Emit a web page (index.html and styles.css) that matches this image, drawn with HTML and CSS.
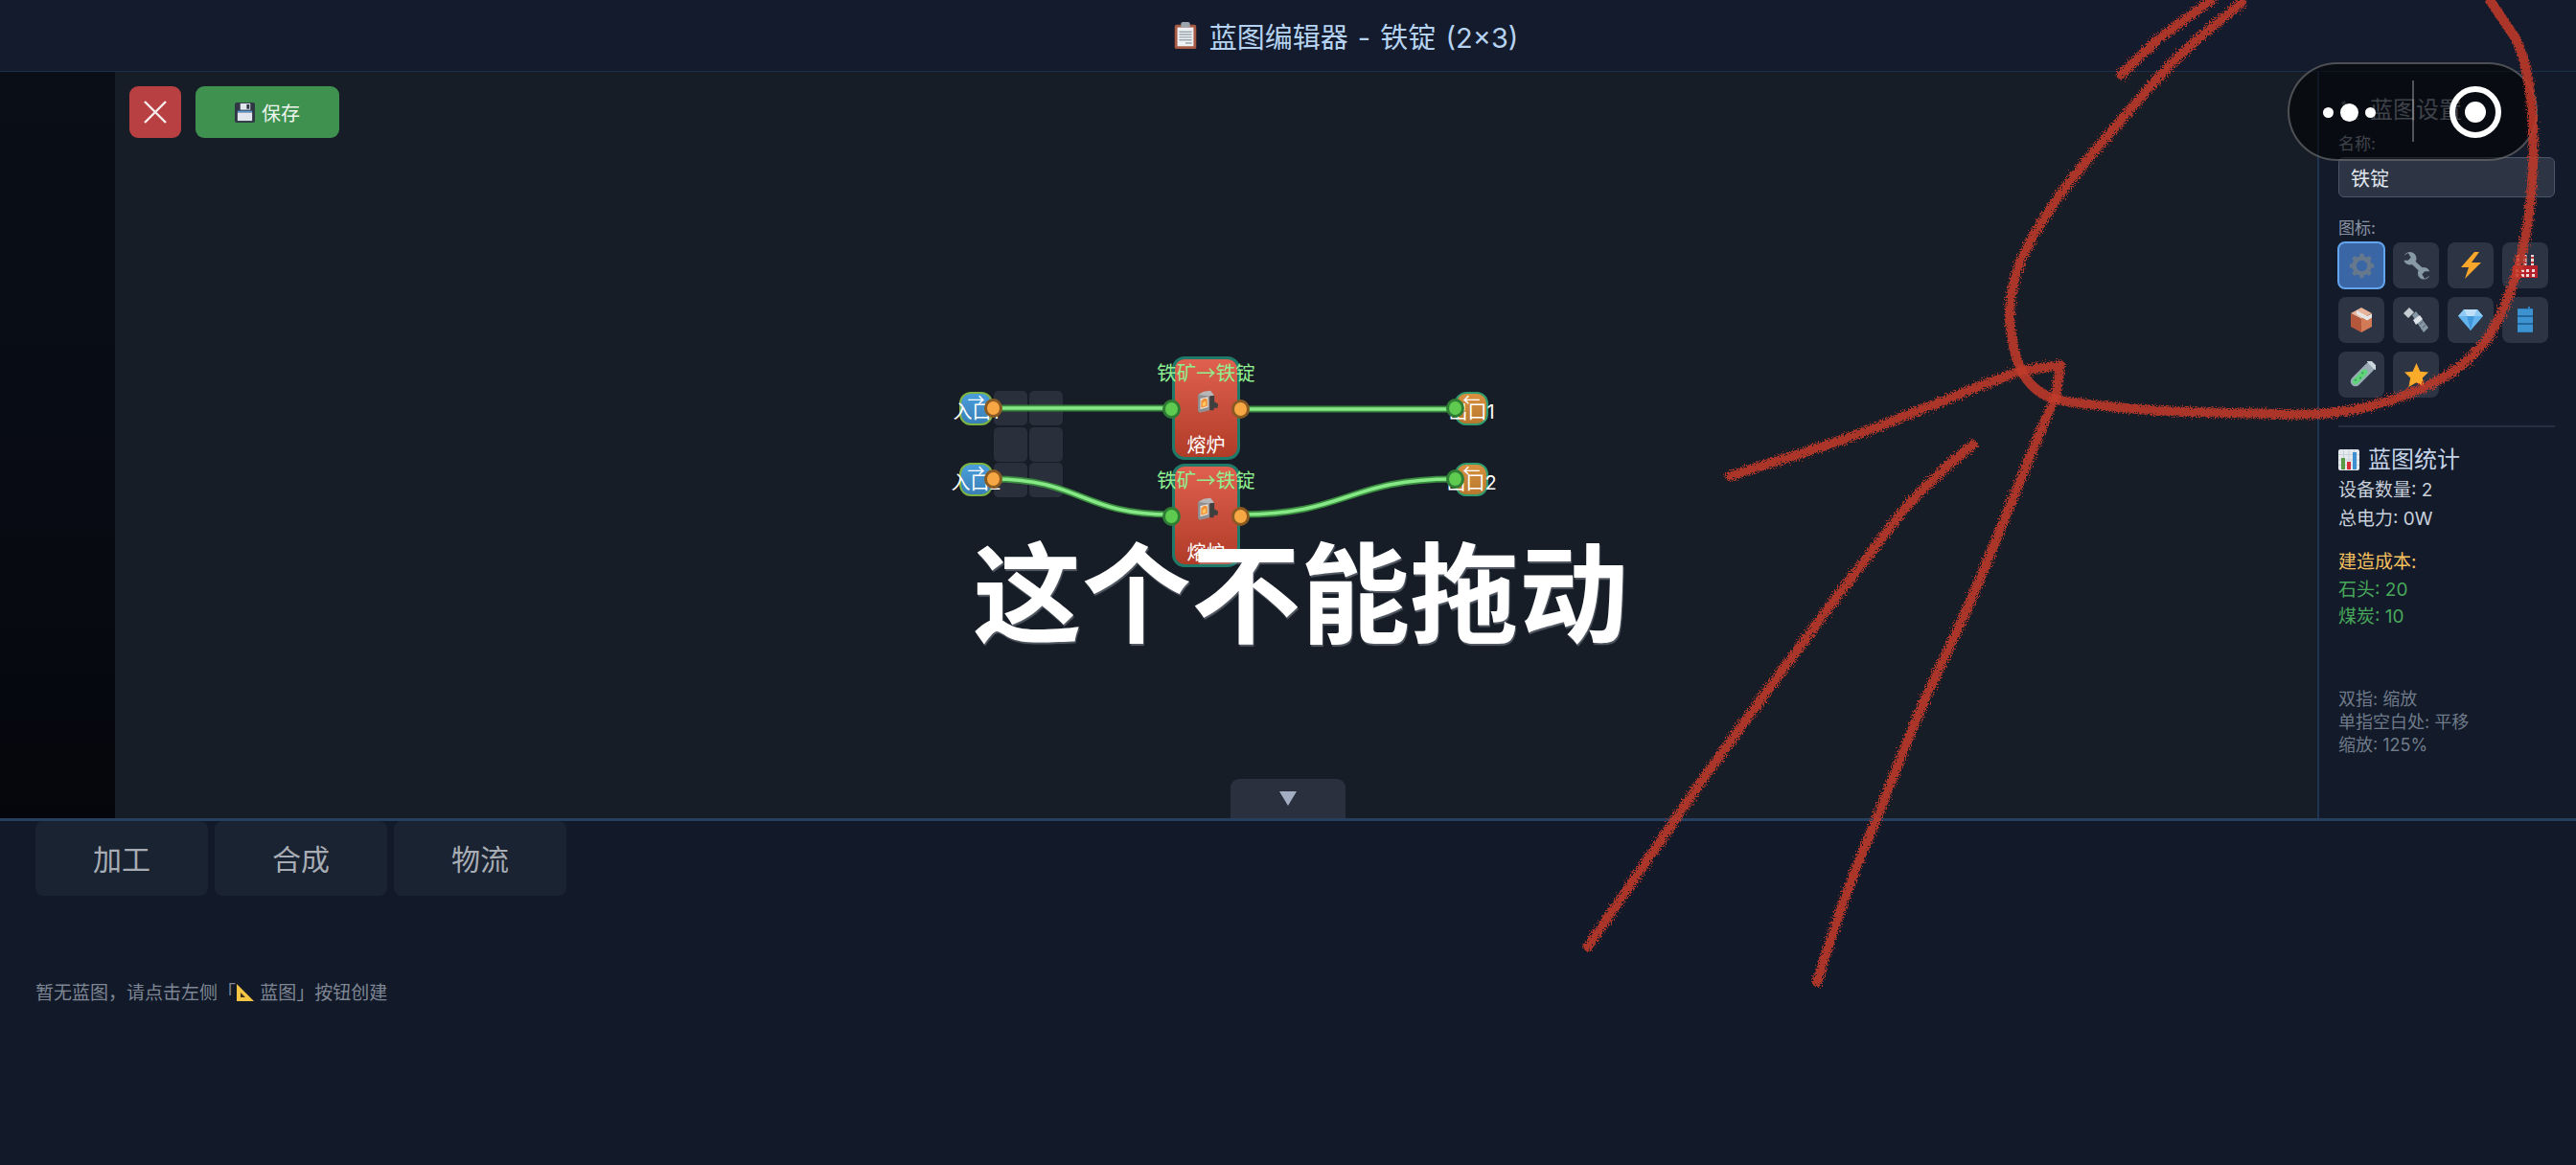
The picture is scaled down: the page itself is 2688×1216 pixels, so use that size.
FILE: index.html
```html
<!DOCTYPE html>
<html lang="zh-CN">
<head>
    <meta charset="UTF-8">
    <title>蓝图编辑器</title>
    <link rel="stylesheet" href="styles.css">
</head>
<body>
    <svg class="defs" width="0" height="0">
        <defs>
            <symbol id="furnace" viewBox="0 0 32 32">
                <path d="M5 7Q5 5 8 4L20 3L20 26L9 29Q5 29 5 26Z" fill="#8f8f8f"/>
                <path d="M6 6L12 2L21 1L26 7L20 8Z" fill="#b8b8b8"/>
                <path d="M8 11L18 9L18 22L8 25Z" fill="#e8e2da"/>
                <path d="M9 14Q13 9 17 12L17 21L9 23Z" fill="#f0923a"/>
                <path d="M11 17Q13 14 15 15L15 20L11 21Z" fill="#ffc861"/>
                <path d="M20 8L26 7L26 15L31 18L30 23L26 23L25 26L20 26Z" fill="#3f3f3f"/>
            </symbol>
        </defs>
    </svg>

    <header class="top-bar">
        <svg class="title-icon" viewBox="0 0 26 32">
            <rect x="1" y="4" width="24" height="27" rx="2" fill="#a65a44"/>
            <rect x="4" y="7" width="18" height="21" fill="#eef1f4"/>
            <rect x="8" y="1" width="10" height="6" rx="2" fill="#9aa5ad"/>
            <path d="M6 12h14M6 15h14M6 18h14M6 21h14M13 24.500h7" stroke="#9aa5ad" stroke-width="1.500"/>
        </svg>
        <span>蓝图编辑器 - 铁锭 (2×3)</span>
    </header>

    <main class="editor">
        <div class="left-strip"></div>

        <section class="canvas">
            <div class="canvas-actions">
                <button class="btn-close">
                    <svg viewBox="0 0 24 24" width="24" height="24"><path d="M1 1L23 23M23 1L1 23" stroke="#f6eeee" stroke-width="2.400"/></svg>
                </button>
                <button class="btn-save">
                    <svg viewBox="0 0 22 22" width="21" height="21">
                        <rect width="22" height="22" rx="2" fill="#2f3644"/>
                        <rect x="6" y="1" width="11" height="7" fill="#e2e7ee"/>
                        <rect x="13" y="2" width="3" height="5" fill="#2f3644"/>
                        <rect x="3" y="9" width="16" height="2" fill="#5b9bd5"/>
                        <rect x="3" y="11" width="16" height="9" fill="#e2e7ee"/>
                    </svg>
                    <span>保存</span>
                </button>
            </div>

            <div class="slots">
                <i></i><i></i><i></i><i></i><i></i><i></i>
            </div>

            <svg class="wires" width="2298" height="778">
                <path class="wire-out" d="M916 351H1101"/>
                <path class="wire-in" d="M916 351H1101"/>
                <path class="wire-out" d="M916 425C1008 425 1009 462 1101 462"/>
                <path class="wire-in" d="M916 425C1008 425 1009 462 1101 462"/>
                <path class="wire-out" d="M1175 352H1397"/>
                <path class="wire-in" d="M1175 352H1397"/>
                <path class="wire-out" d="M1175 462C1286 462 1286 425 1397 425"/>
                <path class="wire-in" d="M1175 462C1286 462 1286 425 1397 425"/>
            </svg>

            <div class="io-node io-in node-a">
                <span class="io-arrow">→</span>
                <span class="io-name">入口1</span>
                <b class="port port-out"></b>
            </div>
            <div class="io-node io-in node-b">
                <span class="io-arrow">→</span>
                <span class="io-name">入口2</span>
                <b class="port port-out"></b>
            </div>
            <div class="io-node io-out node-c">
                <span class="io-arrow">←</span>
                <span class="io-name">出口1</span>
                <b class="port port-in"></b>
            </div>
            <div class="io-node io-out node-d">
                <span class="io-arrow">←</span>
                <span class="io-name">出口2</span>
                <b class="port port-in"></b>
            </div>

            <div class="machine machine-a">
                <span class="recipe">铁矿→铁锭</span>
                <svg class="machine-icon"><use href="#furnace"/></svg>
                <span class="machine-name">熔炉</span>
                <b class="port port-in"></b>
                <b class="port port-out"></b>
            </div>
            <div class="machine machine-b">
                <span class="recipe">铁矿→铁锭</span>
                <svg class="machine-icon"><use href="#furnace"/></svg>
                <span class="machine-name">熔炉</span>
                <b class="port port-in"></b>
                <b class="port port-out"></b>
            </div>

            <button class="collapse"><span></span></button>
        </section>

        <aside class="sidebar">
            <h3 class="side-title dim">
                <svg viewBox="0 0 24 24" width="24" height="24"><path d="M3 4L7 2L8 6L19 18L22 22L17 21L6 9Z" fill="#565c68"/></svg>
                <span>蓝图设置</span>
            </h3>
            <label class="field-label">名称:</label>
            <div class="name-input">铁锭</div>
            <label class="field-label icons-label">图标:</label>
            <div class="icon-grid">
                <div class="icon-cell selected">
                    <svg viewBox="0 0 32 32" width="27" height="27">
                        <circle cx="16" cy="16" r="9.500" fill="none" stroke="#66788c" stroke-width="5.500"/>
                        <path d="M16 1v6M16 25v6M1 16h6M25 16h6M5.400 5.400l4.200 4.200M22.400 22.400l4.200 4.200M26.600 5.400l-4.200 4.200M9.600 22.400l-4.200 4.200" stroke="#66788c" stroke-width="5"/>
                    </svg>
                </div>
                <div class="icon-cell">
                    <svg viewBox="0 0 30 30" width="29" height="29">
                        <path d="M8 8L23 22" stroke="#8899a6" stroke-width="5"/>
                        <circle cx="8" cy="7" r="7" fill="#8899a6"/>
                        <circle cx="23" cy="23" r="6.500" fill="#8899a6"/>
                        <path d="M0 5L6 1L9 6L6 9L0 9Z" fill="#2d3444"/>
                        <path d="M30 25L24 29L21 24L24 21L30 21Z" fill="#2d3444"/>
                    </svg>
                </div>
                <div class="icon-cell">
                    <svg viewBox="0 0 24 28" width="24" height="28"><path d="M16 0L2 16H10L6 28L23 11H13L21 0Z" fill="#f9a62b"/></svg>
                </div>
                <div class="icon-cell">
                    <svg viewBox="0 0 28 28" width="28" height="28">
                        <rect x="5" y="3" width="3" height="14" fill="#e8d9d9"/>
                        <rect x="12.500" y="3" width="3" height="14" fill="#e8d9d9"/>
                        <rect x="20" y="3" width="3" height="14" fill="#e8d9d9"/>
                        <path d="M5 6h3M12.500 6h3M20 6h3M5 11h3M12.500 11h3M20 11h3" stroke="#c2353d" stroke-width="2"/>
                        <rect x="1" y="14" width="26" height="13" fill="#b5202b"/>
                        <path d="M4 18h3v3H4zM10 18h3v3h-3zM15 18h3v3h-3zM21 18h3v3h-3zM4 23h3v3H4zM10 23h3v3h-3zM15 23h3v3h-3zM21 23h3v3h-3z" fill="#ecd9d9"/>
                    </svg>
                </div>
                <div class="icon-cell">
                    <svg viewBox="0 0 24 28" width="24" height="28">
                        <path d="M12 1L23 7L12 13L1 7Z" fill="#e8b59c"/>
                        <path d="M1 7L12 13V27L1 21Z" fill="#b5573a"/>
                        <path d="M23 7L12 13V27L23 21Z" fill="#d17a55"/>
                        <path d="M7 4L18 10L23 7.500V11.500L18 14.500L7 8Z" fill="#e6e6e6"/>
                    </svg>
                </div>
                <div class="icon-cell">
                    <svg viewBox="0 0 28 28" width="28" height="28">
                        <path d="M10 9L14 5L27 22L22 27Z" fill="#8899a6"/>
                        <path d="M21 22l3-3M18 18.500l3-3" stroke="#66757f" stroke-width="1.500"/>
                        <path d="M1 7L7 1L12 6L6 12Z" fill="#c6cdd2"/>
                        <path d="M11 14L18 9L21 13L14 19Z" fill="#dde3e8"/>
                    </svg>
                </div>
                <div class="icon-cell">
                    <svg viewBox="0 0 28 24" width="28" height="24">
                        <path d="M7 1H21L27 8L14 23L1 8Z" fill="#63b3ed"/>
                        <path d="M7 1L10 8H18L21 1Z" fill="#bde0f8"/>
                        <path d="M1 8H27L21 1L18 8L14 23L10 8L7 1Z" fill="#8fcbf3"/>
                        <path d="M10 8H18L14 23Z" fill="#3f97dc"/>
                    </svg>
                </div>
                <div class="icon-cell">
                    <svg viewBox="0 0 20 28" width="20" height="28">
                        <rect x="2" y="2" width="16" height="25" fill="#2f7fbd"/>
                        <rect x="13" y="0" width="2" height="3" fill="#2f7fbd"/>
                        <path d="M2 10h16M2 18h16" stroke="#1f5f94" stroke-width="1.500"/>
                        <rect x="2" y="3" width="16" height="6" fill="#3d92d0"/>
                        <rect x="2" y="11" width="16" height="6" fill="#3d92d0"/>
                        <rect x="2" y="19" width="16" height="7" fill="#3d92d0"/>
                    </svg>
                </div>
                <div class="icon-cell">
                    <svg viewBox="0 0 28 28" width="29" height="29">
                        <g transform="rotate(45 14 14)">
                            <rect x="9" y="-2" width="10" height="30" rx="5" fill="#99aab5"/>
                            <rect x="11" y="7" width="6" height="19" rx="3" fill="#5fd37a"/>
                            <rect x="8" y="-3" width="12" height="4" rx="1" fill="#ccd6dd"/>
                            <circle cx="13" cy="12" r="1" fill="#2f9c54"/>
                            <circle cx="15" cy="17" r="1" fill="#2f9c54"/>
                            <circle cx="13" cy="22" r="1" fill="#2f9c54"/>
                        </g>
                    </svg>
                </div>
                <div class="icon-cell">
                    <svg viewBox="0 0 28 28" width="27" height="27">
                        <path d="M14 1L18 10L27 11L20.500 17L22.500 27L14 22L5.500 27L7.500 17L1 11L10 10Z" fill="#fbab2a"/>
                    </svg>
                </div>
            </div>
            <hr class="side-line">
            <h3 class="side-title stats-title">
                <svg viewBox="0 0 22 22" width="22" height="22">
                    <rect width="22" height="22" rx="2" fill="#e4e9ee"/>
                    <path d="M0 5.500h22M0 11h22M0 16.500h22M5.500 0v22M11 0v22M16.500 0v22" stroke="#c4ccd4" stroke-width=".8"/>
                    <rect x="3" y="9" width="4" height="12" fill="#5a9a44"/>
                    <rect x="9" y="13" width="4" height="8" fill="#d92d3a"/>
                    <rect x="15" y="3" width="4" height="18" fill="#3d8fd1"/>
                </svg>
                <span>蓝图统计</span>
            </h3>
            <p class="stat">设备数量: 2</p>
            <p class="stat">总电力: 0W</p>
            <p class="cost-title">建造成本:</p>
            <p class="cost">石头: 20</p>
            <p class="cost">煤炭: 10</p>
            <div class="help">
                <p>双指: 缩放</p>
                <p>单指空白处: 平移</p>
                <p>缩放: 125%</p>
            </div>
        </aside>
    </main>

    <footer class="palette">
        <nav class="tabs">
            <div class="tab">加工</div>
            <div class="tab">合成</div>
            <div class="tab">物流</div>
        </nav>
        <p class="empty-hint">
            暂无蓝图，请点击左侧「<svg viewBox="0 0 20 20" width="20" height="20"><path d="M1 1L19 19H1Z" fill="#f7c544"/><path d="M5 10L10 15H5Z" fill="#3a3020"/></svg> 蓝图」按钮创建
        </p>
    </footer>

    <div class="big-note">这个不能拖动</div>

    <div class="capsule">
        <span class="dots"><i></i><i class="mid"></i><i></i></span>
        <span class="capsule-line"></span>
        <span class="ring"><i></i></span>
    </div>

    <svg class="scribble" width="2688" height="1216" viewBox="0 0 2688 1216">
        <defs>
            <filter id="rough" x="-5%" y="-5%" width="110%" height="110%">
                <feTurbulence type="fractalNoise" baseFrequency="0.7" numOctaves="2" seed="4"/>
                <feDisplacementMap in="SourceGraphic" scale="9"/>
                <feGaussianBlur stdDeviation=".5"/>
            </filter>
        </defs>
        <g filter="url(#rough)">
            <path d="M2339 3L2306 30Q2274 56 2243 91Q2213 126 2182 162Q2151 199 2130 232Q2110 265 2103 288Q2097 312 2097 328Q2097 345 2102 366Q2107 388 2119 401Q2131 414 2148 417Q2165 421 2199 424Q2233 428 2284 430Q2335 431 2376 432Q2417 434 2454 428Q2492 421 2526 406Q2560 391 2580 371Q2601 351 2614 318Q2628 285 2635 248Q2642 212 2643 172Q2645 133 2640 96Q2635 60 2625 40L2598 0"/>
            <path d="M2213 78L2253 40L2308 0"/>
            <path d="M1805 497L1842 485Q1879 474 1913 462Q1947 451 1988 434Q2029 418 2063 404Q2097 391 2110 387L2150 381L2145 414L2127 455Q2110 497 2083 563Q2056 630 2032 680Q2008 729 1984 789Q1961 849 1940 898Q1920 948 1896 1025"/>
            <path d="M2059 464Q2008 504 1977 544Q1947 584 1919 620Q1892 656 1858 702Q1824 749 1783 805Q1743 862 1657 988"/>
        </g>
    </svg>
</body>
</html>
```

FILE: styles.css
```css
* {
    box-sizing: border-box;
}
html, body {
    margin: 0;
    height: 100%;
}
body {
    position: relative;
    width: 2688px;
    height: 1216px;
    overflow: hidden;
    display: flex;
    flex-direction: column;
    background-color: #121929;
    font-family: Inter, "Noto Sans CJK SC", sans-serif;
}
p, h3 {
    margin: 0;
    font-weight: 400;
}
.defs {
    position: absolute;
}

/* top */
.top-bar {
    height: 75px;
    flex: none;
    padding-left: 120px;
    display: flex;
    align-items: center;
    justify-content: center;
    gap: 12px;
    background-color: #141b2c;
    border-bottom: 1px solid #1c3049;
    color: #b5d3f0;
    font-size: 29px;
    word-spacing: 2px;
}
.title-icon {
    width: 26px;
    height: 30px;
}

/* main */
.editor {
    height: 782px;
    flex: none;
    display: flex;
    border-bottom: 3px solid #25405f;
}
.left-strip {
    width: 120px;
    flex: none;
    background: linear-gradient(#0a0e17, #080b13 60%, #04060b);
}
.canvas {
    position: relative;
    flex: 1;
    background-color: #161d27;
}
.canvas-actions {
    position: absolute;
    left: 15px;
    top: 15px;
    display: flex;
    gap: 15px;
}
.canvas-actions button {
    height: 54px;
    border: none;
    border-radius: 9px;
    padding: 0;
    display: flex;
    align-items: center;
    justify-content: center;
    font-family: inherit;
}
.btn-close {
    width: 54px;
    background-color: #b83f42;
}
.btn-save {
    width: 150px;
    gap: 7px;
    padding-bottom: 2px;
    background-color: #3f9150;
    color: #eef5ef;
    font-size: 20px;
}

.slots {
    position: absolute;
    left: 917px;
    top: 333px;
    display: grid;
    grid-template-columns: repeat(2, 35px);
    grid-auto-rows: 36px;
    gap: 1.500px 2px;
}
.slots i {
    background-color: #2a2f3c;
    border-radius: 5px;
}
.wires {
    position: absolute;
    left: 0;
    top: 0;
}
.wire-out {
    fill: none;
    stroke: #3a8a3f;
    stroke-width: 7;
}
.wire-in {
    fill: none;
    stroke: #86e886;
    stroke-width: 3.500;
}

.io-node {
    position: absolute;
    width: 35px;
    height: 35px;
    border-radius: 12px;
    border: 2px solid #7cb342;
    color: #fff;
    background: linear-gradient(#4a9edb, #3a80b8);
}
.io-out {
    border-color: #2f9c70;
    background: linear-gradient(#d8913f, #b8782f);
}
.node-a { left: 881px; top: 334px; }
.node-b { left: 881px; top: 408px; }
.node-c { left: 1398px; top: 334px; }
.node-d { left: 1398px; top: 408px; }
.io-arrow {
    position: absolute;
    left: 0;
    right: 0;
    top: -5px;
    text-align: center;
    font-family: "Noto Sans CJK SC", sans-serif;
    font-size: 18px;
    line-height: 20px;
}
.io-name {
    position: absolute;
    left: -20px;
    right: -20px;
    top: 7px;
    text-align: center;
    font-size: 20px;
    line-height: 24px;
}

.port {
    position: absolute;
    width: 19px;
    height: 20px;
    border-radius: 50%;
    border: 3px solid;
}
.port-in {
    background-color: #5ecb50;
    border-color: #2f7d34;
}
.port-out {
    background-color: #f7a844;
    border-color: #8a5a22;
}
.io-in .port-out {
    right: -12px;
    top: 5px;
}
.io-out .port-in {
    left: -11px;
    top: 5px;
}

.machine {
    position: absolute;
    left: 1103px;
    width: 71px;
    height: 108px;
    border: 3px solid #1f7a6a;
    border-radius: 13px;
    background: linear-gradient(#e0604f, #b03c28);
    display: flex;
    flex-direction: column;
    align-items: center;
    color: #fff;
}
.machine-a { top: 297px; }
.machine-b { top: 409px; }
.recipe {
    flex: none;
    margin-top: -1px;
    white-space: nowrap;
    color: #90ee90;
    font-family: "Noto Sans CJK SC", sans-serif;
    font-size: 20.500px;
    line-height: 28px;
}
.machine-icon {
    flex: none;
    width: 26px;
    height: 26px;
    margin-top: 5px;
}
.machine-name {
    flex: none;
    margin-top: 18px;
    font-size: 20px;
    line-height: 28px;
}
.machine .port-in {
    left: -13px;
    top: 42px;
}
.machine .port-out {
    right: -13px;
    top: 42px;
}

.collapse {
    position: absolute;
    left: 1164px;
    bottom: 0;
    width: 120px;
    height: 41px;
    padding: 0;
    border: none;
    border-radius: 9px 9px 0 0;
    background-color: #2a303e;
    display: flex;
    align-items: center;
    justify-content: center;
}
.collapse span {
    border-left: 9px solid transparent;
    border-right: 9px solid transparent;
    border-top: 15px solid #a3aec2;
}

/* sidebar */
.sidebar {
    width: 270px;
    flex: none;
    padding: 22px 22px 0 20px;
    background-color: #131a29;
    border-left: 2px solid #1f3450;
}
.side-title {
    display: flex;
    align-items: center;
    gap: 9px;
    font-size: 24px;
    line-height: 36px;
    color: #c5d3e8;
}
.side-title svg {
    flex: none;
}
.side-title.dim {
    color: #8a93a3;
}
.field-label {
    display: block;
    margin-top: 5px;
    color: #8a93a3;
    font-size: 17px;
    line-height: 24px;
}
.name-input {
    width: 226px;
    height: 42px;
    margin-top: 2px;
    padding-left: 12px;
    display: flex;
    align-items: center;
    background-color: #2d3444;
    border: 1px solid #4a5568;
    border-radius: 6px;
    color: #e2e8f0;
    font-size: 20px;
}
.icons-label {
    margin-top: 20px;
}
.icon-grid {
    display: grid;
    grid-template-columns: repeat(4, 48px);
    grid-auto-rows: 48px;
    gap: 9px;
    margin-top: 3px;
}
.icon-cell {
    background-color: #2d3444;
    border-radius: 8px;
    display: flex;
    align-items: center;
    justify-content: center;
}
.icon-cell.selected {
    background-color: #3b66a6;
    border: 2px solid #63a4ee;
    margin: -1px;
}
.side-line {
    height: 2px;
    margin: 29px 0 0;
    border: none;
    background-color: #262f40;
}
.stats-title {
    margin-top: 17px;
    line-height: 34px;
}
.stat {
    color: #c8d0dc;
    font-size: 19px;
    line-height: 30px;
}
.cost-title {
    margin-top: 15px;
    color: #f6c15f;
    font-size: 19px;
    line-height: 30px;
}
.cost {
    color: #48a85a;
    font-size: 19px;
    line-height: 28px;
}
.help {
    margin-top: 60px;
    color: #6f7a8a;
    font-size: 18px;
    line-height: 24px;
}

/* bottom */
.palette {
    flex: 1;
    padding: 0 37px;
    background-color: #121929;
}
.tabs {
    display: flex;
    gap: 7px;
}
.tab {
    width: 180px;
    height: 78px;
    padding-bottom: 2px;
    display: flex;
    align-items: center;
    justify-content: center;
    background-color: #1a2332;
    border-radius: 8px;
    color: #a8adb5;
    font-size: 30px;
}
.empty-hint {
    margin-top: 89px;
    color: #7f8794;
    font-size: 19px;
    line-height: 26px;
}
.empty-hint svg {
    vertical-align: -3px;
}

/* overlays */
.big-note {
    position: absolute;
    left: 1015px;
    top: 531px;
    color: #fff;
    font-family: "Noto Sans CJK SC", sans-serif;
    font-weight: 700;
    font-size: 114px;
    line-height: 164px;
    white-space: nowrap;
    text-shadow: 1px 2px 1px rgba(200, 205, 215, .35);
}
.capsule {
    position: absolute;
    left: 2387px;
    top: 65px;
    width: 261px;
    height: 103px;
    border: 2px solid rgba(255, 255, 255, .28);
    border-radius: 52px;
    background-color: rgba(0, 0, 0, .55);
}
.dots {
    position: absolute;
    left: 35px;
    top: 40px;
    display: flex;
    align-items: center;
    gap: 7px;
    height: 20px;
}
.dots i {
    width: 11px;
    height: 11px;
    border-radius: 50%;
    background-color: #fff;
}
.dots i.mid {
    width: 19px;
    height: 19px;
}
.capsule-line {
    position: absolute;
    left: 128px;
    top: 17px;
    width: 2px;
    height: 64px;
    background-color: rgba(255, 255, 255, .3);
}
.ring {
    position: absolute;
    left: 167px;
    top: 23px;
    width: 54px;
    height: 54px;
    border: 6px solid #fff;
    border-radius: 50%;
    display: flex;
    align-items: center;
    justify-content: center;
}
.ring i {
    width: 22px;
    height: 22px;
    border-radius: 50%;
    background-color: #fff;
}
.scribble {
    position: absolute;
    left: 0;
    top: 0;
    pointer-events: none;
}
.scribble path {
    fill: none;
    stroke: #c03a2a;
    stroke-width: 10;
    stroke-linecap: round;
    stroke-linejoin: round;
    opacity: .88;
}
```
